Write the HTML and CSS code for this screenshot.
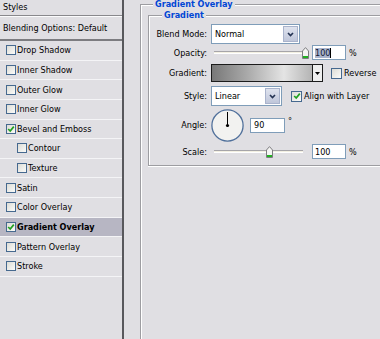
FILE: index.html
```html
<!DOCTYPE html>
<html lang="en">
<head>
    <meta charset="UTF-8">
    <title>Layer Style - Gradient Overlay</title>
    <link rel="stylesheet" href="styles.css">
</head>
<body>
    <div class="dialog">
        <div class="styles-panel">
            <div class="panel-title">Styles</div>
            <div class="panel-blend">Blending Options: Default</div>
            <ul class="fx-list">
                <li class="fx"><span class="check"></span>Drop Shadow</li>
                <li class="fx"><span class="check"></span>Inner Shadow</li>
                <li class="fx"><span class="check"></span>Outer Glow</li>
                <li class="fx"><span class="check"></span>Inner Glow</li>
                <li class="fx"><span class="check"><svg viewBox="0 0 8 8"><polyline points="1.2,4 3.2,6 6.8,1.6"/></svg></span>Bevel and Emboss</li>
                <li class="fx sub"><span class="check"></span>Contour</li>
                <li class="fx sub"><span class="check"></span>Texture</li>
                <li class="fx"><span class="check"></span>Satin</li>
                <li class="fx"><span class="check"></span>Color Overlay</li>
                <li class="fx active"><span class="check"><svg viewBox="0 0 8 8"><polyline points="1.2,4 3.2,6 6.8,1.6"/></svg></span>Gradient Overlay</li>
                <li class="fx"><span class="check"></span>Pattern Overlay</li>
                <li class="fx"><span class="check"></span>Stroke</li>
            </ul>
        </div>

        <div class="options">
            <fieldset class="group outer">
                <legend>Gradient Overlay</legend>
                <fieldset class="group inner">
                    <legend>Gradient</legend>

                    <div class="row row-blend">
                        <label>Blend Mode:</label>
                        <div class="select select-blend">
                            <span class="select-text">Normal</span>
                            <span class="drop-btn"><svg viewBox="0 0 7 5"><polyline points="1,1 3.5,3.6 6,1"/></svg></span>
                        </div>
                    </div>

                    <div class="row row-opacity">
                        <label>Opacity:</label>
                        <div class="slider">
                            <div class="track"></div>
                            <svg class="thumb" style="left: 88px" viewBox="0 0 7 12"><path d="M0.5,11.5 V4 L3.5,0.6 L6.5,4 V11.5 Z"/><rect x="1" y="9" width="5" height="2"/></svg>
                        </div>
                        <div class="num"><span class="sel">100</span><span class="caret"></span></div>
                        <span class="unit">%</span>
                    </div>

                    <div class="row row-gradient">
                        <label>Gradient:</label>
                        <div class="swatch">
                            <div class="swatch-bar"></div>
                            <div class="swatch-btn"><svg viewBox="0 0 5 3"><polygon points="0,0 5,0 2.5,3"/></svg></div>
                        </div>
                        <span class="box"></span>
                        <span class="box-label">Reverse</span>
                    </div>

                    <div class="row row-style">
                        <label>Style:</label>
                        <div class="select select-style">
                            <span class="select-text">Linear</span>
                            <span class="drop-btn"><svg viewBox="0 0 7 5"><polyline points="1,1 3.5,3.6 6,1"/></svg></span>
                        </div>
                        <span class="box"><svg viewBox="0 0 8 8"><polyline points="1.2,4 3.2,6 6.8,1.6"/></svg></span>
                        <span class="box-label">Align with Layer</span>
                    </div>

                    <div class="row row-angle">
                        <label>Angle:</label>
                        <svg class="dial" viewBox="0 0 33 33">
                            <circle cx="16.5" cy="16.5" r="15.6" class="dial-ring"/>
                            <line x1="16.5" y1="16.5" x2="16.5" y2="3"/>
                            <circle cx="16.5" cy="16.5" r="1.6" class="dial-dot"/>
                        </svg>
                        <div class="num num-angle">90</div>
                        <span class="deg">°</span>
                    </div>

                    <div class="row row-scale">
                        <label>Scale:</label>
                        <div class="slider">
                            <div class="track"></div>
                            <svg class="thumb" style="left: 52px" viewBox="0 0 7 12"><path d="M0.5,11.5 V4 L3.5,0.6 L6.5,4 V11.5 Z"/><rect x="1" y="9" width="5" height="2"/></svg>
                        </div>
                        <div class="num">100</div>
                        <span class="unit">%</span>
                    </div>
                </fieldset>
            </fieldset>
        </div>
    </div>
</body>
</html>
```

FILE: styles.css
```css
* {
    box-sizing: border-box;
}
body {
    margin: 0;
    width: 380px;
    height: 339px;
    overflow: hidden;
    background-color: #e0dfe3;
    font-family: "DejaVu Sans Condensed", "Liberation Sans", sans-serif;
    font-size: 9px;
    color: #000;
}
.dialog {
    display: flex;
    height: 339px;
}

/* left list of effects */
.styles-panel {
    width: 124px;
    flex: none;
    border-right: 2px solid #58585c;
}
.panel-title {
    height: 16px;
    line-height: 15px;
    padding-left: 3px;
    border-bottom: 1px solid #88888c;
}
.panel-blend {
    height: 25px;
    line-height: 22px;
    padding-left: 3px;
    border-top: 1px solid #fbfbfc;
    border-bottom: 2px solid #7c7c80;
}
.fx-list {
    list-style: none;
    margin: 0;
    padding: 0;
}
.fx {
    display: flex;
    align-items: center;
    gap: 1px;
    height: 19.64px;
    padding-left: 6px;
    border-bottom: 1px solid #f4f4f6;
}
.fx.sub {
    padding-left: 17px;
}
.fx.active {
    background-color: #b7b6c3;
    font-weight: bold;
}
.check, .box {
    display: inline-flex;
    align-items: center;
    justify-content: center;
    flex: none;
    width: 10px;
    height: 10px;
    border: 1px solid #46698f;
    background: linear-gradient(135deg, #dcdcd6, #fbfbf9);
}
.check svg, .box svg {
    width: 8px;
    height: 8px;
    fill: none;
    stroke: #21a121;
    stroke-width: 1.7;
}

/* right side options, the group boxes run on past the window edge */
.options {
    flex: 1;
    min-width: 0;
    display: flex;
    flex-direction: column;
    padding-left: 16px;
}
.group {
    margin: 0;
    min-width: 0;
    border: 1px solid #9d9da1;
    border-right: none;
}
.group legend {
    padding: 0 2px;
    line-height: 11px;
    color: #0046d5;
    font-weight: bold;
    background-color: #e0dfe3;
}
.outer {
    flex: 1;
    border-bottom: none;
    margin-top: -1px;
    padding: 0 0 0 7px;
    box-shadow: inset 1px 1px 0 #fff;
}
.outer > legend {
    margin-left: 5px;
}
.inner {
    padding: 0 0 6px 0;
    box-shadow: inset 1px 1px 0 #fff, 0 1px 0 #fff;
}
.inner > legend {
    margin-left: 13px;
}
.row {
    display: flex;
    align-items: center;
    margin-top: 3px;
}
.row label {
    width: 58px;
    flex: none;
    margin-right: 4px;
    text-align: right;
}
.row-blend { height: 20px; }
.row-opacity { height: 15px; margin-top: 1px; }
.row-gradient { height: 18px; margin-top: 4px; }
.row-style { height: 20px; margin-top: 4px; }
.row-angle { height: 32px; }
.row-scale { height: 15px; }

.select {
    display: flex;
    height: 20px;
    border: 1px solid #7f9db9;
    background-color: #fff;
}
.select-blend { width: 89px; }
.select-style { width: 71px; }
.select-text {
    flex: 1;
    padding-left: 3px;
    line-height: 18px;
}
.drop-btn {
    display: flex;
    align-items: center;
    justify-content: center;
    width: 15px;
    margin: 1px;
    border: 1px solid #a9b3cc;
    background: linear-gradient(#dfe3ee, #bfc6da);
}
.drop-btn svg {
    width: 7px;
    height: 5px;
    fill: none;
    stroke: #243353;
    stroke-width: 1.6;
}

.slider {
    position: relative;
    display: flex;
    align-items: center;
    width: 92px;
    height: 15px;
    margin-left: 3px;
}
.track {
    width: 89px;
    height: 3px;
    border-top: 1px solid #a6a5a9;
    border-bottom: 1px solid #fff;
    background-color: #f3f0e2;
}
.thumb {
    position: absolute;
    top: 2px;
    width: 7px;
    height: 12px;
}
.thumb path {
    fill: #f5f5f3;
    stroke: #7d7d80;
}
.thumb rect {
    fill: #22b022;
}
.num {
    display: flex;
    align-items: center;
    width: 34px;
    height: 15px;
    margin-left: 6px;
    padding-left: 2px;
    border: 1px solid #7f9db9;
    background-color: #fff;
}
.sel {
    background-color: #a9b3cc;
    color: #101830;
}
.caret {
    width: 1px;
    height: 10px;
    background-color: #000;
}
.unit {
    margin-left: 3px;
}

.swatch {
    display: flex;
    width: 112px;
    height: 18px;
    border: 1px solid #1c1c1c;
}
.swatch-bar {
    flex: 1;
    background: linear-gradient(to right, #787878, #a9a9a9 35%, #e4e4e4 72%, #b4b4b4);
}
.swatch-btn {
    display: flex;
    align-items: center;
    justify-content: center;
    width: 10px;
    border-left: 1px solid #1c1c1c;
    background-color: #eeeeee;
}
.swatch-btn svg {
    width: 5px;
    height: 3px;
}
.row .box {
    width: 11px;
    height: 11px;
}
.row-gradient .box { margin-left: 8px; }
.row-style .box { margin-left: 9px; }
.box-label {
    margin-left: 2px;
}

.dial {
    width: 33px;
    height: 33px;
}
.dial-ring {
    fill: #f2f2f0;
    stroke: #50709b;
    stroke-width: 1.3;
}
.dial line {
    stroke: #000;
    stroke-width: 1;
}
.dial-dot {
    fill: #000;
}
.num-angle {
    width: 35px;
    padding-left: 3px;
}
.deg {
    align-self: flex-start;
    margin-top: 7px;
    margin-left: 3px;
}
```
